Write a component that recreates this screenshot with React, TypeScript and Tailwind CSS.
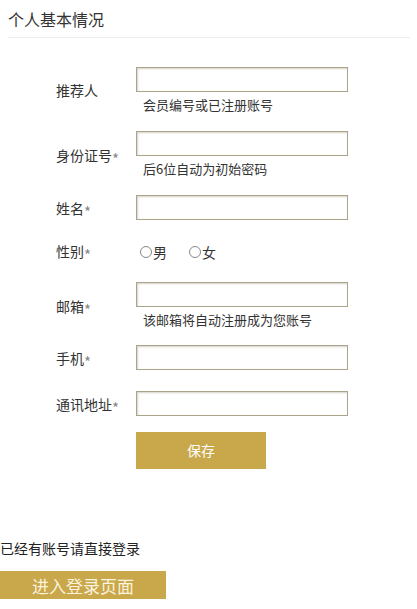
import React from "react";

const fieldBox =
  "w-[212px] h-[25px] border border-[#aaa48c] bg-white shadow-[inset_1px_1px_2px_rgba(90,80,40,0.25)] outline-none px-1 text-[13px]";

function Label({ text, required }: { text: string; required?: boolean }) {
  return (
    <div className="w-[80px] shrink-0 text-[14px] text-[#333] leading-none">
      {text}
      {required && (
        <span className="inline-block relative top-[4px] text-[15px] leading-none text-[#888]">*</span>
      )}
    </div>
  );
}

function Row({
  label,
  required,
  hint,
  className = "",
}: {
  label: string;
  required?: boolean;
  hint?: string;
  className?: string;
}) {
  return (
    <div className={`flex items-center ${className}`}>
      <Label text={label} required={required} />
      <div className="flex flex-col">
        <input type="text" className={fieldBox} />
        {hint && (
          <div className="pl-[7px] mt-[5px] text-[13px] leading-[16px] text-[#333]">{hint}</div>
        )}
      </div>
    </div>
  );
}

export default function App() {
  return (
    <div
      className="w-[417px] h-[609px] bg-white overflow-hidden"
      style={{ fontFamily: '"Noto Sans CJK SC", "Noto Sans", sans-serif' }}
    >
      <div className="px-[8px] pt-[9px]">
        <h2 className="text-[16px] leading-[20px] text-[#333] font-normal">个人基本情况</h2>
        <div className="mt-[8px] h-px bg-[#eeeeee] w-[402px]" />
      </div>

      <div className="pl-[56px] flex flex-col">
        <Row label="推荐人" hint="会员编号或已注册账号" className="mt-[29px]" />
        <Row label="身份证号" required hint="后6位自动为初始密码" className="mt-[18px]" />
        <Row label="姓名" required className="mt-[18px]" />

        <div className="flex items-start mt-[23px] h-[20px]">
          <Label text="性别" required />
          <div className="flex items-center gap-[22px] pl-[4px] mt-[2px] text-[14px] leading-none text-[#333]">
            <label className="flex items-center gap-[1px]">
              <span className="w-[12px] h-[12px] rounded-full border border-[#888] bg-white" />
              男
            </label>
            <label className="flex items-center gap-[1px]">
              <span className="w-[12px] h-[12px] rounded-full border border-[#888] bg-white" />
              女
            </label>
          </div>
        </div>

        <Row label="邮箱" required hint="该邮箱将自动注册成为您账号" className="mt-[19px]" />
        <Row label="手机" required className="mt-[17px]" />
        <Row label="通讯地址" required className="mt-[21px]" />

        <div className="pl-[80px] mt-[16px]">
          <button className="w-[130px] h-[37px] bg-[#c9a74b] text-white text-[14px]">保存</button>
        </div>
      </div>

      <div className="mt-[70px] text-[14px] leading-[18px] text-[#222]">已经有账号请直接登录</div>
      <button className="mt-[14px] w-[166px] h-[28px] bg-[#c9a74b] text-[#fbf3dc] text-[17px] leading-none">
        进入登录页面
      </button>
    </div>
  );
}
